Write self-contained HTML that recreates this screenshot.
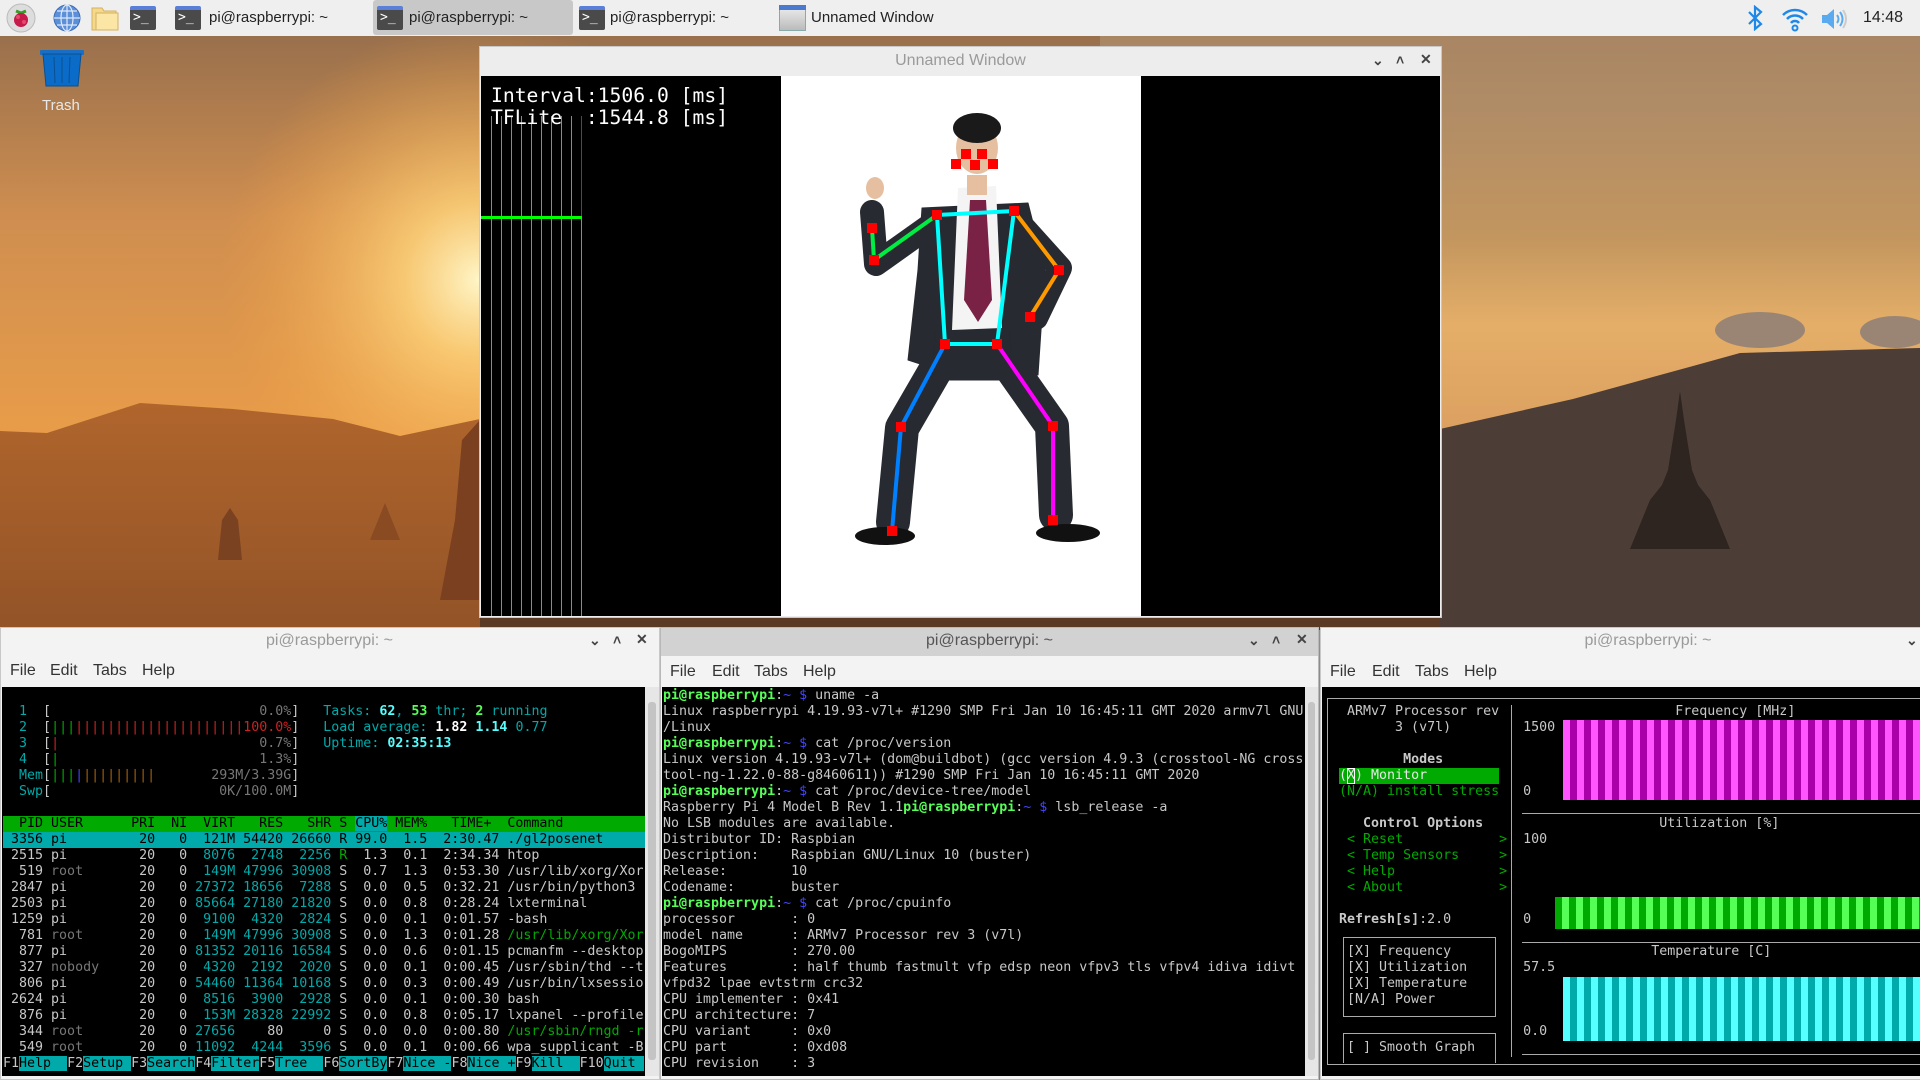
<!DOCTYPE html>
<html><head><meta charset="utf-8"><style>
*{margin:0;padding:0;box-sizing:border-box}
body{width:1920px;height:1080px;overflow:hidden;position:relative;font-family:"Liberation Sans",sans-serif;background:#c08050}
.abs{position:absolute}
.mono{font-family:"DejaVu Sans Mono","Liberation Mono",monospace;font-size:13.3px;line-height:16px;white-space:pre}
.tb{position:absolute;top:0;left:0;width:1920px;height:36px;background:#efefef}
.tbtxt{position:absolute;top:9px;font-size:15px;color:#222}
.term-ic{position:absolute;width:26px;height:24px;background:#4a4a4a;border-top:4px solid #5a7fd8;border-radius:2px}
.term-ic:after{content:">_";position:absolute;left:3px;top:0px;color:#fff;font-size:13px;font-family:"DejaVu Sans Mono",monospace}
.title{position:absolute;font-size:16px;color:#9a9a9a;text-align:center}
.menu{position:absolute;font-size:16px;color:#333}
.btn{position:absolute;font-size:14px;color:#444;font-weight:bold}
.c{color:#00aaaa}.bc{color:#55ffff;font-weight:bold}.g{color:#00aa00}.bg{color:#55ff55;font-weight:bold}.r{color:#cc2222}.w{color:#ffffff;font-weight:bold}.dg{color:#777}.bl{color:#4444ff}
.fk{background:#00aaaa;color:#000}
</style></head><body>

<svg class="abs" style="left:0;top:0" width="1920" height="1080" viewBox="0 0 1920 1080">
<defs>
<linearGradient id="lg" x1="0" y1="0" x2="0" y2="1">
<stop offset="0" stop-color="#8e6a4c"/><stop offset="0.2" stop-color="#cf8e50"/><stop offset="0.45" stop-color="#eea047"/><stop offset="0.7" stop-color="#f4a845"/><stop offset="1" stop-color="#d88a3a"/></linearGradient>
<radialGradient id="sun" cx="480" cy="280" r="260" gradientUnits="userSpaceOnUse"><stop offset="0" stop-color="#fff6c8"/><stop offset="0.3" stop-color="#ffd47a" stop-opacity="0.8"/><stop offset="1" stop-color="#f5a040" stop-opacity="0"/></radialGradient>
<linearGradient id="rg" x1="0" y1="0" x2="0" y2="1">
<stop offset="0" stop-color="#a58262"/><stop offset="0.1" stop-color="#b08c66"/><stop offset="0.22" stop-color="#c3965f"/><stop offset="0.3" stop-color="#e4ae68"/><stop offset="0.4" stop-color="#dca060"/><stop offset="0.5" stop-color="#c48e62"/><stop offset="0.62" stop-color="#b08066"/><stop offset="1" stop-color="#9c7868"/></linearGradient>
<linearGradient id="hl" x1="0" y1="0" x2="0" y2="1"><stop offset="0" stop-color="#b0652c"/><stop offset="1" stop-color="#8a4e26"/></linearGradient>
</defs>
<rect x="0" y="0" width="1920" height="1080" fill="url(#lg)"/>
<rect x="1100" y="0" width="820" height="1080" fill="url(#rg)"/>
<rect x="0" y="0" width="1000" height="700" fill="url(#sun)"/>
<polygon fill="url(#hl)" points="0,431 47,433 140,403 233,409 333,419 400,436 480,419 480,700 0,700"/>
<polygon fill="#7a4220" points="222,520 230,508 238,520 242,560 218,560"/>
<polygon fill="#8a4a22" points="370,540 385,503 400,540"/>
<polygon fill="#7a4020" points="462,440 480,420 480,600 440,600 455,520"/>
<rect x="480" y="600" width="961" height="30" fill="#5a3a25"/>
<ellipse cx="1760" cy="330" rx="45" ry="18" fill="#9a8574"/>
<ellipse cx="1895" cy="332" rx="35" ry="16" fill="#9a8574"/>
<polygon fill="#4d3d37" points="1440,429 1573,399 1693,366 1740,353 1920,348 1920,700 1440,700"/>
<polygon fill="#2e2420" points="1680,391 1676,420 1668,470 1662,485 1650,500 1630,549 1730,549 1710,500 1698,485 1692,470 1684,420"/>
</svg>

<svg class="abs" style="left:38px;top:48px" width="48" height="40" viewBox="0 0 48 40"><rect x="2" y="2" width="44" height="5" rx="1" fill="#1a6fc4"/><polygon points="5,6 43,6 40,38 8,38" fill="#0a6cc8" stroke="#0a4f90"/><line x1="16" y1="9" x2="17" y2="35" stroke="#0a4f90"/><line x1="24" y1="9" x2="24" y2="35" stroke="#0a4f90"/><line x1="32" y1="9" x2="31" y2="35" stroke="#0a4f90"/></svg>
<div class="abs" style="left:42px;top:97px;font-size:15px;color:#e8e8e8">Trash</div>

<div class="tb"></div>
<svg class="abs" style="left:5px;top:2px" width="32" height="32"><circle cx="16" cy="16" r="14" fill="#ddd" stroke="#bbb"/><path d="M11 9 L16 11 L21 9" stroke="#3a9a2a" stroke-width="3" fill="none"/><circle cx="16" cy="18" r="7" fill="#c51a4a"/><circle cx="13" cy="15" r="2" fill="#e54a6a"/><circle cx="19" cy="20" r="2" fill="#e54a6a"/></svg>
<svg class="abs" style="left:52px;top:3px" width="30" height="30"><circle cx="15" cy="15" r="13" fill="#5b8fd8" stroke="#3a6ab8"/><path d="M2 15 H28 M15 2 V28 M5 8 H25 M5 22 H25" stroke="#dde8f8" stroke-width="1.2" fill="none"/><ellipse cx="15" cy="15" rx="6" ry="13" stroke="#dde8f8" stroke-width="1.2" fill="none"/></svg>
<svg class="abs" style="left:90px;top:4px" width="30" height="28"><path d="M2 4 H12 L14 7 H26 V26 H2 Z" fill="#f5d88a" stroke="#d4b060"/><rect x="6" y="9" width="22" height="17" fill="#fbe6a6" stroke="#d4b060"/></svg>
<div class="term-ic" style="left:130px;top:6px"></div>
<div class="term-ic" style="left:175px;top:6px"></div>
<div class="tbtxt" style="left:209px">pi@raspberrypi: ~</div>
<div class="abs" style="left:373px;top:0;width:200px;height:35px;background:#c8c8c8;border-radius:3px"></div>
<div class="term-ic" style="left:377px;top:6px"></div>
<div class="tbtxt" style="left:409px">pi@raspberrypi: ~</div>
<div class="term-ic" style="left:579px;top:6px"></div>
<div class="tbtxt" style="left:610px">pi@raspberrypi: ~</div>
<div class="abs" style="left:779px;top:5px;width:27px;height:26px;background:linear-gradient(#eee,#bbb);border:1px solid #8aa"></div>
<div class="abs" style="left:779px;top:5px;width:27px;height:5px;background:#4a7ad0"></div>
<div class="tbtxt" style="left:811px">Unnamed Window</div>
<svg class="abs" style="left:1745px;top:5px" width="20" height="26"><path d="M4 7 L16 19 L10 24 V2 L16 7 L4 19" stroke="#1e88e8" stroke-width="2.2" fill="none"/></svg>
<svg class="abs" style="left:1780px;top:6px" width="30" height="26"><path d="M3 9 A17 17 0 0 1 27 9 M7 13 A11 11 0 0 1 23 13 M11 17 A5 5 0 0 1 19 17" stroke="#1e88e8" stroke-width="2.5" fill="none"/><circle cx="15" cy="22" r="2.5" fill="none" stroke="#1e88e8" stroke-width="2"/></svg>
<svg class="abs" style="left:1820px;top:7px" width="28" height="24"><path d="M2 8 H7 L14 2 V22 L7 16 H2 Z" fill="#5aaaf0"/><path d="M17 8 Q20 12 17 16 M20 5 Q25 12 20 19" stroke="#5aaaf0" stroke-width="2" fill="none"/><path d="M23 3 Q29 12 23 21" stroke="#ccc" stroke-width="2" fill="none"/></svg>
<div class="tbtxt" style="left:1863px;font-size:16px">14:48</div>

<div class="abs" style="left:479px;top:46px;width:963px;height:572px;background:#ededed;border:1px solid #c8c8c8"></div>
<div class="title" style="left:480px;top:52px;width:961px">Unnamed Window</div>
<div class="btn" style="left:1372px;top:52px">&#8964;</div>
<div class="btn" style="left:1396px;top:52px">&#708;</div>
<div class="btn" style="left:1420px;top:51px">&#10005;</div>
<div class="abs" style="left:481px;top:76px;width:959px;height:540px;background:#000"></div>
<svg class="abs" style="left:481px;top:76px" width="300" height="540">
<g stroke="#8a8a8a" stroke-width="1">
<line x1="10.5" y1="40" x2="10.5" y2="540"/><line x1="20.5" y1="40" x2="20.5" y2="540"/><line x1="30.5" y1="40" x2="30.5" y2="540"/><line x1="40.5" y1="40" x2="40.5" y2="540"/><line x1="50.5" y1="40" x2="50.5" y2="540"/><line x1="60.5" y1="40" x2="60.5" y2="540"/><line x1="70.5" y1="40" x2="70.5" y2="540"/><line x1="80.5" y1="40" x2="80.5" y2="540"/><line x1="90.5" y1="40" x2="90.5" y2="540"/><line x1="100.5" y1="40" x2="100.5" y2="540"/></g>
<line x1="100.5" y1="40" x2="100.5" y2="140" stroke="#ff0000"/>
<rect x="0" y="140" width="101" height="3" fill="#00ff00"/>
</svg>
<div class="abs" style="left:491px;top:85px;font-family:'DejaVu Sans Mono',monospace;font-size:19.7px;line-height:22px;color:#fff;white-space:pre">Interval:1506.0 [ms]
TFLite  :1544.8 [ms]</div>
<div class="abs" style="left:781px;top:76px;width:360px;height:540px;background:#fff"></div>
<svg class="abs" style="left:781px;top:76px" width="360" height="540" viewBox="781 76 360 540">
<g fill="#272a30" stroke="#272a30" stroke-linecap="round" stroke-linejoin="round">
<polygon points="922,208 1028,203 1045,270 1038,375 1000,365 945,372 908,360 918,270"/>
<polyline points="935,222 876,264 872,212" fill="none" stroke-width="24"/>
<polyline points="1015,218 1060,268 1036,318" fill="none" stroke-width="24"/>
<polyline points="950,345 902,428 893,522" fill="none" stroke-width="34"/>
<polyline points="995,345 1052,426 1056,515" fill="none" stroke-width="34"/>
<polygon points="935,330 1010,330 1012,380 933,380"/>
</g>
<ellipse cx="885" cy="536" rx="30" ry="9" fill="#111"/>
<ellipse cx="1068" cy="533" rx="32" ry="9" fill="#111"/>
<ellipse cx="875" cy="188" rx="9" ry="11" fill="#e6bfa0"/>
<polygon points="958,188 996,186 1002,328 952,330" fill="#f4f4f4"/>
<polygon points="970,200 986,200 992,300 978,322 964,300" fill="#7a2246"/>
<rect x="967" y="175" width="20" height="20" fill="#e6bfa0"/>
<ellipse cx="977" cy="148" rx="21" ry="26" fill="#e6bfa0"/>
<ellipse cx="977" cy="128" rx="24" ry="15" fill="#1a1a1a"/>
<g stroke-width="4" fill="none">
<polyline points="872,228 874,260 937,215" stroke="#00ee44"/>
<polygon points="937,215 1014,211 997,344 945,344" stroke="#00ffff"/>
<polyline points="1014,211 1059,270 1030,317" stroke="#ff9900"/>
<polyline points="945,344 901,427 892,531" stroke="#0080ff"/>
<polyline points="997,344 1053,426 1053,520" stroke="#ff00ff"/>
</g>
<g fill="#ff0000">
<rect x="961" y="149" width="10" height="10"/><rect x="977" y="149" width="10" height="10"/><rect x="951" y="159" width="10" height="10"/><rect x="970" y="160" width="10" height="10"/><rect x="988" y="159" width="10" height="10"/>
<rect x="932" y="210" width="10" height="10"/><rect x="1009" y="206" width="10" height="10"/><rect x="869" y="255" width="10" height="10"/><rect x="867" y="223" width="10" height="10"/><rect x="1054" y="265" width="10" height="10"/><rect x="1025" y="312" width="10" height="10"/><rect x="940" y="339" width="10" height="10"/><rect x="992" y="339" width="10" height="10"/><rect x="896" y="422" width="10" height="10"/><rect x="887" y="526" width="10" height="10"/><rect x="1048" y="421" width="10" height="10"/><rect x="1048" y="515" width="10" height="10"/>
</g>
</svg>

<div class="abs" style="left:0;top:627px;width:660px;height:453px;background:#f3f3f3;border:1px solid #c8c8c8"></div>
<div class="title" style="left:0;top:632px;width:659px">pi@raspberrypi: ~</div>
<div class="btn" style="left:589px;top:632px">&#8964;</div>
<div class="btn" style="left:613px;top:632px">&#708;</div>
<div class="btn" style="left:636px;top:631px">&#10005;</div>
<div class="menu" style="left:10px;top:662px">File</div><div class="menu" style="left:50px;top:662px">Edit</div><div class="menu" style="left:93px;top:662px">Tabs</div><div class="menu" style="left:142px;top:662px">Help</div>
<div class="abs" style="left:2px;top:687px;width:643px;height:389px;background:#000"></div>
<div class="abs" style="left:645px;top:687px;width:14px;height:389px;background:#e6e6e6"></div>
<div class="abs" style="left:648px;top:702px;width:8px;height:358px;background:#c4c4c4;border-radius:3px"></div>
<div class="abs mono" style="left:3px;top:688px;color:#c8c8c8;width:642px">
  <span class="c">1</span>  [                          <span class="dg">0.0%</span>]   <span class="c">Tasks: </span><span class="bc">62</span><span class="c">, </span><span class="bg">53</span><span class="c"> thr; </span><span class="bg">2</span><span class="c"> running</span>
  <span class="c">2</span>  [<span class="g">|||</span><span class="r">|||||||||||||||||||||100.0%</span>]   <span class="c">Load average: </span><span class="w">1.82</span> <span class="bc">1.14</span> <span class="c">0.77</span>
  <span class="c">3</span>  [<span class="r">|</span>                         <span class="dg">0.7%</span>]   <span class="c">Uptime: </span><span class="bc">02:35:13</span>
  <span class="c">4</span>  [<span class="g">|</span>                         <span class="dg">1.3%</span>]
  <span class="c">Mem</span>[<span class="g">|||</span><span class="bl">|</span><span style="color:#a06010">|||||||||</span>       <span class="dg">293M/3.39G</span>]
  <span class="c">Swp</span>[                     <span class="dg">0K/100.0M</span>]

<span style="background:#00aa00;color:#000;display:inline-block;width:642px">  PID USER      PRI  NI  VIRT   RES   SHR S <span style="background:#00aaaa">CPU%</span> MEM%   TIME+  Command</span>
<span style="background:#00aaaa;color:#000;display:inline-block;width:642px"> 3356 pi         20   0  121M 54420 26660 R 99.0  1.5  2:30.47 ./gl2posenet</span>
 2515 pi         20   0  <span class="c">8076  2748  2256</span> <span class="g">R</span>  1.3  0.1  2:34.34 htop
  519 <span class="dg">root</span>       20   0  <span class="c">149M 47996 30908</span> S  0.7  1.3  0:53.30 /usr/lib/xorg/Xor
 2847 pi         20   0 <span class="c">27372 18656  7288</span> S  0.0  0.5  0:32.21 /usr/bin/python3
 2503 pi         20   0 <span class="c">85664 27180 21820</span> S  0.0  0.8  0:28.24 lxterminal
 1259 pi         20   0  <span class="c">9100  4320  2824</span> S  0.0  0.1  0:01.57 -bash
  781 <span class="dg">root</span>       20   0  <span class="c">149M 47996 30908</span> S  0.0  1.3  0:01.28 <span class="g">/usr/lib/xorg/Xor</span>
  877 pi         20   0 <span class="c">81352 20116 16584</span> S  0.0  0.6  0:01.15 pcmanfm --desktop
  327 <span class="dg">nobody</span>     20   0  <span class="c">4320  2192  2020</span> S  0.0  0.1  0:00.45 /usr/sbin/thd --t
  806 pi         20   0 <span class="c">54460 11364 10168</span> S  0.0  0.3  0:00.49 /usr/bin/lxsessio
 2624 pi         20   0  <span class="c">8516  3900  2928</span> S  0.0  0.1  0:00.30 bash
  876 pi         20   0  <span class="c">153M 28328 22992</span> S  0.0  0.8  0:05.17 lxpanel --profile
  344 <span class="dg">root</span>       20   0 <span class="c">27656</span>    80     0 S  0.0  0.0  0:00.80 <span class="g">/usr/sbin/rngd -r</span>
  549 <span class="dg">root</span>       20   0 <span class="c">11092  4244  3596</span> S  0.0  0.1  0:00.66 wpa_supplicant -B
F1<span class="fk">Help  </span>F2<span class="fk">Setup </span>F3<span class="fk">Search</span>F4<span class="fk">Filter</span>F5<span class="fk">Tree  </span>F6<span class="fk">SortBy</span>F7<span class="fk">Nice -</span>F8<span class="fk">Nice +</span>F9<span class="fk">Kill  </span>F10<span class="fk">Quit </span></div>

<div class="abs" style="left:660px;top:627px;width:659px;height:453px;background:#f3f3f3;border:1px solid #b8b8b8"></div>
<div class="abs" style="left:661px;top:628px;width:657px;height:28px;background:#d2d2d2"></div>
<div class="title" style="left:660px;top:632px;width:659px;color:#555">pi@raspberrypi: ~</div>
<div class="btn" style="left:1248px;top:632px">&#8964;</div>
<div class="btn" style="left:1272px;top:632px">&#708;</div>
<div class="btn" style="left:1296px;top:631px">&#10005;</div>
<div class="menu" style="left:670px;top:663px">File</div><div class="menu" style="left:712px;top:663px">Edit</div><div class="menu" style="left:754px;top:663px">Tabs</div><div class="menu" style="left:803px;top:663px">Help</div>
<div class="abs" style="left:662px;top:687px;width:643px;height:389px;background:#000"></div>
<div class="abs" style="left:1305px;top:687px;width:13px;height:389px;background:#e6e6e6"></div>
<div class="abs" style="left:1308px;top:702px;width:7px;height:358px;background:#c4c4c4;border-radius:3px"></div>
<div class="abs mono" style="left:663px;top:688px;color:#c8c8c8"><span class="bg">pi@raspberrypi</span>:<span class="bl">~ $</span> uname -a
Linux raspberrypi 4.19.93-v7l+ #1290 SMP Fri Jan 10 16:45:11 GMT 2020 armv7l GNU
/Linux
<span class="bg">pi@raspberrypi</span>:<span class="bl">~ $</span> cat /proc/version
Linux version 4.19.93-v7l+ (dom@buildbot) (gcc version 4.9.3 (crosstool-NG cross
tool-ng-1.22.0-88-g8460611)) #1290 SMP Fri Jan 10 16:45:11 GMT 2020
<span class="bg">pi@raspberrypi</span>:<span class="bl">~ $</span> cat /proc/device-tree/model
Raspberry Pi 4 Model B Rev 1.1<span class="bg">pi@raspberrypi</span>:<span class="bl">~ $</span> lsb_release -a
No LSB modules are available.
Distributor ID: Raspbian
Description:    Raspbian GNU/Linux 10 (buster)
Release:        10
Codename:       buster
<span class="bg">pi@raspberrypi</span>:<span class="bl">~ $</span> cat /proc/cpuinfo
processor       : 0
model name      : ARMv7 Processor rev 3 (v7l)
BogoMIPS        : 270.00
Features        : half thumb fastmult vfp edsp neon vfpv3 tls vfpv4 idiva idivt
vfpd32 lpae evtstrm crc32
CPU implementer : 0x41
CPU architecture: 7
CPU variant     : 0x0
CPU part        : 0xd08
CPU revision    : 3</div>

<div class="abs" style="left:1320px;top:627px;width:610px;height:453px;background:#f3f3f3;border:1px solid #c8c8c8"></div>
<div class="title" style="left:1320px;top:632px;width:656px">pi@raspberrypi: ~</div>
<div class="btn" style="left:1906px;top:632px">&#8964;</div>
<div class="menu" style="left:1330px;top:663px">File</div><div class="menu" style="left:1372px;top:663px">Edit</div><div class="menu" style="left:1415px;top:663px">Tabs</div><div class="menu" style="left:1464px;top:663px">Help</div>
<div class="abs" style="left:1322px;top:687px;width:598px;height:389px;background:#000"></div>
<div class="abs" style="left:1327px;top:698px;width:600px;height:367px;border:1px solid #aaa;border-right:none"></div>
<div class="abs" style="left:1511px;top:705px;width:1px;height:352px;background:#aaa"></div>
<div class="abs" style="left:1522px;top:813px;width:400px;height:1px;background:#aaa"></div>
<div class="abs" style="left:1522px;top:942px;width:400px;height:1px;background:#aaa"></div>
<div class="abs" style="left:1522px;top:1054px;width:400px;height:1px;background:#aaa"></div>
<div class="abs" style="left:1343px;top:937px;width:153px;height:80px;border:1px solid #aaa"></div>
<div class="abs" style="left:1343px;top:1033px;width:153px;height:30px;border:1px solid #aaa;border-bottom:none"></div>
<div class="abs" style="left:1563px;top:720px;width:360px;height:80px;background:repeating-linear-gradient(90deg,#ff55ff 0 7px,#aa00aa 7px 14px)"></div>
<div class="abs" style="left:1555px;top:897px;width:370px;height:32px;background:repeating-linear-gradient(90deg,#00aa00 0 7px,#55ff55 7px 14px)"></div>
<div class="abs" style="left:1563px;top:977px;width:360px;height:64px;background:repeating-linear-gradient(90deg,#55ffff 0 7px,#00aaaa 7px 14px)"></div>
<div class="abs" style="left:1339px;top:768px;width:160px;height:16px;background:#00aa00"></div>
<div class="abs" style="left:1347px;top:768px;width:8px;height:16px;border:1px solid #fff"></div>
<div class="abs mono" style="left:1323px;top:688px;color:#c8c8c8">
   ARMv7 Processor rev                      Frequency [MHz]
         3 (v7l)         1500

          <b>Modes</b>
  <span style="color:#e8e8e8">(X) Monitor</span>
  <span class="g">(N/A) install stress</span>   0

     <b>Control Options</b>                      Utilization [%]
   <span class="g">&lt; Reset            &gt;</span>  100
   <span class="g">&lt; Temp Sensors     &gt;</span>
   <span class="g">&lt; Help             &gt;</span>
   <span class="g">&lt; About            &gt;</span>

  <b>Refresh[s]</b>:2.0         0

   [X] Frequency                         Temperature [C]
   [X] Utilization       57.5
   [X] Temperature
   [N/A] Power

                         0.0
   [ ] Smooth Graph</div>

</body></html>
